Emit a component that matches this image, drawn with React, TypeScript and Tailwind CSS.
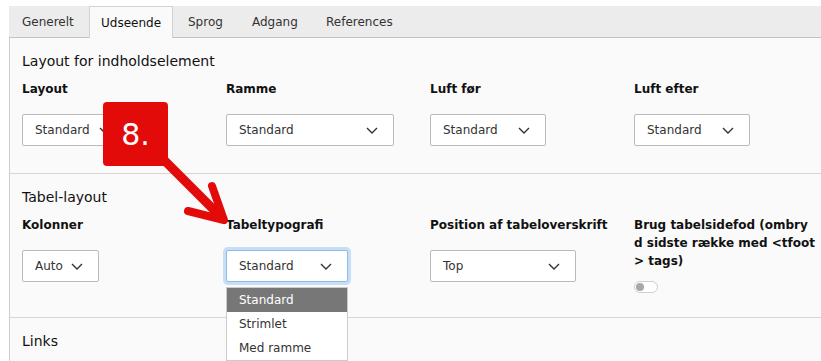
import React from "react";

function Chevron() {
  return (
    <svg width="12" height="7" viewBox="0 0 12 7" className="shrink-0">
      <path d="M1 1 L6 6 L11 1" fill="none" stroke="#333" strokeWidth="1.4" />
    </svg>
  );
}

function Select({ value, w, focused }: { value: string; w: string; focused?: boolean }) {
  return (
    <div
      className={
        focused
          ? `${w} h-[32px] flex items-center justify-between pl-[12px] pr-[15px] bg-white border border-[#8fbbe6] rounded-[2px] ring-[3px] ring-[#c6def6] text-[12px] text-[#333]`
          : `${w} h-[32px] flex items-center justify-between pl-[12px] pr-[15px] bg-white border border-[#bbb] rounded-[2px] text-[12px] text-[#333]`
      }
    >
      <span>{value}</span>
      <Chevron />
    </div>
  );
}

function Label({ children }: { children: React.ReactNode }) {
  return <div className="text-[12px] leading-[18px] font-bold text-[#111] mb-[16px]">{children}</div>;
}

export default function App() {
  const tabs = [
    { t: "Generelt", c: "w-[80px] pl-[12px]" },
    { t: "Udseende", c: "w-[84px] pl-[11px]" },
    { t: "Sprog", c: "w-[64px] pl-[14px]" },
    { t: "Adgang", c: "w-[74px] pl-[14px]" },
    { t: "References", c: "w-[92px] pl-[14px]" },
  ];
  return (
    <div className="relative w-[821px] h-[361px] overflow-hidden bg-white pt-[6px] pl-[9px] font-['DejaVu_Sans',sans-serif]">
      <div className="flex h-[32px] bg-[#ececec] border-b border-[#c3c3c3] text-[12px] text-[#333]">
        {tabs.map(({ t, c }) =>
          t === "Udseende" ? (
            <div key={t} className={`${c} shrink-0 h-[32px] flex items-center bg-[#fafafa] border-x border-t border-[#d2d2d2] text-[#111]`}>
              {t}
            </div>
          ) : (
            <div key={t} className={`${c} shrink-0 h-[31px] flex items-center border-x border-t border-transparent`}>
              {t}
            </div>
          )
        )}
      </div>
      <div className="bg-[#fafafa] border-l border-[#cccccc] h-[400px]">
        {/* Section 1 */}
        <div className="px-[12px] pt-[13px] pb-[27px] border-b border-[#d6d6d6]">
          <div className="text-[14px] leading-[20px] text-[#111] mb-[9px]">Layout for indholdselement</div>
          <div className="flex">
            <div className="w-[204px] shrink-0">
              <Label>Layout</Label>
              <Select value="Standard" w="w-[105px]" />
            </div>
            <div className="w-[204px] shrink-0">
              <Label>Ramme</Label>
              <Select value="Standard" w="w-[168px]" />
            </div>
            <div className="w-[204px] shrink-0">
              <Label>Luft før</Label>
              <Select value="Standard" w="w-[116px]" />
            </div>
            <div className="w-[180px] shrink-0">
              <Label>Luft efter</Label>
              <Select value="Standard" w="w-[116px]" />
            </div>
          </div>
        </div>
        {/* Section 2 */}
        <div className="px-[12px] pt-[13px] pb-[24px] border-b border-[#d6d6d6]">
          <div className="text-[14px] leading-[20px] text-[#111] mb-[9px]">Tabel-layout</div>
          <div className="flex">
            <div className="w-[204px] shrink-0">
              <Label>Kolonner</Label>
              <Select value="Auto" w="w-[77px]" />
            </div>
            <div className="w-[204px] shrink-0">
              <Label>Tabeltypografi</Label>
              <div className="relative">
                <Select value="Standard" w="w-[122px]" focused />
                <div className="absolute left-0 top-[37px] w-[122px] bg-white border border-[#cccccc] text-[12px] text-[#333] z-10">
                  <div className="h-[24px] flex items-center pl-[12px] bg-[#777777] text-white">Standard</div>
                  <div className="h-[24px] flex items-center pl-[12px]">Strimlet</div>
                  <div className="h-[24px] flex items-center pl-[12px]">Med ramme</div>
                </div>
              </div>
            </div>
            <div className="w-[204px] shrink-0">
              <Label>Position af tabeloverskrift</Label>
              <Select value="Top" w="w-[146px]" />
            </div>
            <div className="w-[186px] shrink-0">
              <div className="text-[12px] leading-[18px] font-bold text-[#111]">
                <div>Brug tabelsidefod (ombry</div>
                <div>d sidste række med &lt;tfoot</div>
                <div>&gt; tags)</div>
              </div>
              <div className="mt-[11px] w-[24px] h-[12px] rounded-full border border-[#cfcfcf] bg-white flex items-center pl-[1px]">
                <div className="w-[8px] h-[8px] rounded-full bg-[#a8a8a8]" />
              </div>
            </div>
          </div>
        </div>
        {/* Section 3 */}
        <div className="px-[12px] pt-[13px]">
          <div className="text-[14px] leading-[20px] text-[#111]">Links</div>
        </div>
      </div>

      {/* Callout overlay */}
      <div className="absolute left-[103px] top-[102px] w-[65px] h-[64px] rounded-[4px] bg-[#e30a0a] flex items-center justify-center text-white text-[30px] font-['DejaVu_Sans',sans-serif] z-20">
        8.
      </div>
      <svg className="absolute left-0 top-0 z-20 pointer-events-none" width="821" height="361">
        <path d="M164 160 L220 216" stroke="#e30a0a" strokeWidth="9" fill="none" />
        <path d="M188 211 L224 220 L212 186" stroke="#e30a0a" strokeWidth="8" fill="none" strokeLinecap="round" strokeLinejoin="round" />
      </svg>
    </div>
  );
}
